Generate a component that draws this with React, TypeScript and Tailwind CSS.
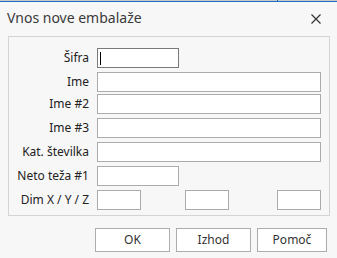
import React from "react";

const font = { fontFamily: '"Noto Sans", "Open Sans", sans-serif' };

function Row({ label, children, top }: { label: string; children: React.ReactNode; top: string }) {
  return (
    <div className={`flex items-center h-[20px] ${top}`}>
      <div className="w-[80px] text-right text-[12px] text-[#222] leading-none">{label}</div>
      <div className="ml-[8px] flex h-full">{children}</div>
    </div>
  );
}

const inputCls = "h-[20px] border border-[#ababab] bg-white box-border";

export default function App() {
  return (
    <div className="w-[337px] h-[258px] bg-[#f7f7f7] overflow-hidden flex flex-col" style={font}>
      <div className="flex h-[1px]">
        <div className="w-[277px] bg-[#c9c9c9]" />
        <div className="w-[1px] bg-[#1e6fc4]" />
        <div className="flex-1 bg-[#c9c9c9]" />
      </div>
      <div className="h-[1px] bg-[#1e6fc4]" />
      <div className="h-[34px] flex items-center justify-between pl-[7px] pr-[16px]">
        <span className="text-[14px] text-[#3a3a3a] leading-none -mt-[2px]">Vnos nove embalaže</span>
        <svg width="10" height="10" viewBox="0 0 10 10" className="-mt-[1px]">
          <path d="M0.5 0.5 L9.5 9.5 M9.5 0.5 L0.5 9.5" stroke="#333" strokeWidth="1.2" />
        </svg>
      </div>
      <div className="ml-[8px] w-[322px] h-[180px] border border-[#d4d4d4] flex flex-col pt-[11px]">
        <Row label="Šifra" top="">
          <div className="w-[82px] h-[20px] border border-[#7a7a7a] bg-white flex items-center pl-[2px]">
            <div className="w-[1px] h-[13px] bg-black" />
          </div>
        </Row>
        <Row label="Ime" top="mt-[4px]">
          <div className={`${inputCls} w-[224px]`} />
        </Row>
        <Row label="Ime #2" top="mt-[2px]">
          <div className={`${inputCls} w-[224px]`} />
        </Row>
        <Row label="Ime #3" top="mt-[4px]">
          <div className={`${inputCls} w-[224px]`} />
        </Row>
        <Row label="Kat. številka" top="mt-[4px]">
          <div className={`${inputCls} w-[224px]`} />
        </Row>
        <Row label="Neto teža #1" top="mt-[4px]">
          <div className={`${inputCls} w-[82px]`} />
        </Row>
        <Row label="Dim X / Y / Z" top="mt-[4px]">
          <div className="flex">
            <div className={`${inputCls} w-[44px]`} />
            <div className={`${inputCls} w-[44px] ml-[44px]`} />
            <div className={`${inputCls} w-[44px] ml-[48px]`} />
          </div>
        </Row>
      </div>
      <div className="flex mt-[12px] ml-[95px] gap-[6px]">
        <button className="w-[75px] h-[24px] border border-[#adadad] bg-white text-[12px] text-[#333]">OK</button>
        <button className="w-[75px] h-[24px] border border-[#adadad] bg-white text-[12px] text-[#333]">Izhod</button>
        <button className="w-[70px] h-[24px] border border-[#adadad] bg-white text-[12px] text-[#333]">Pomoč</button>
      </div>
    </div>
  );
}
